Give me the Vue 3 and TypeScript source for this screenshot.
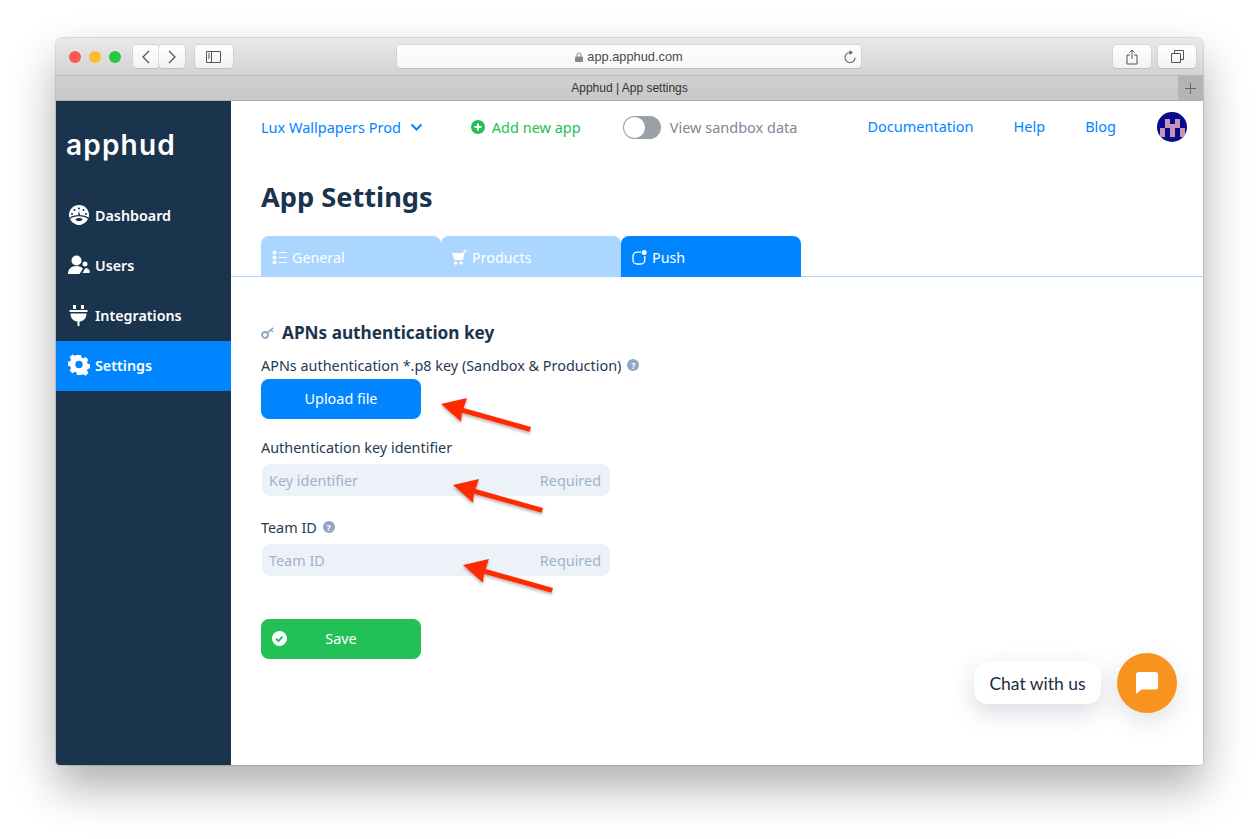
<template>
  <div class="window">
    <header class="toolbar">
      <div class="lights">
        <span class="light red"></span>
        <span class="light yellow"></span>
        <span class="light green"></span>
      </div>
      <div class="nav-pair">
        <button class="tool-btn small">
          <svg width="10" height="14" viewBox="0 0 10 14"><path d="M8 1 2 7l6 6" fill="none" stroke="#555" stroke-width="1.3" /></svg>
        </button>
        <button class="tool-btn small">
          <svg width="10" height="14" viewBox="0 0 10 14"><path d="m2 1 6 6-6 6" fill="none" stroke="#555" stroke-width="1.3" /></svg>
        </button>
      </div>
      <button class="tool-btn wide sidebar-btn">
        <svg width="16" height="12" viewBox="0 0 16 12"><path d="M.5.5h14v11H.5zM5.5.5v11" fill="none" stroke="#555" /><path d="M2 3h2M2 5h2M2 7h2" stroke="#555" /></svg>
      </button>
      <div class="address">
        <svg class="lock" width="8" height="10" viewBox="0 0 8 10"><path d="M2 4.500V3a2 2 0 0 1 4 0v1.500" fill="none" stroke="#888" /><rect y="4.500" width="8" height="5.500" rx="1" fill="#888" /></svg>
        <span>app.apphud.com</span>
        <svg class="reload" width="12" height="13" viewBox="0 0 12 13"><path d="M6 2.500a5 5 0 1 0 5 5" fill="none" stroke="#666" stroke-width="1.100" /><path d="M5.500 0 9 2.500 5.500 5z" fill="#666" /></svg>
      </div>
      <button class="tool-btn wide">
        <svg width="12" height="16" viewBox="0 0 12 16"><path d="M4 6H1v9h10V6H8M6 10V1M3.500 3.500 6 1l2.500 2.500" fill="none" stroke="#555" /></svg>
      </button>
      <button class="tool-btn wide last">
        <svg width="13" height="13" viewBox="0 0 13 13"><path d="M.5 3.500h9v9h-9zM3.500 3.500v-3h9v9h-3" fill="none" stroke="#555" /></svg>
      </button>
    </header>
    <div class="tabbar">
      <span class="tab-title">Apphud | App settings</span>
      <span class="plus">
        <svg width="11" height="11" viewBox="0 0 11 11"><path d="M5.500 0v11M0 5.500h11" stroke="#666" /></svg>
      </span>
    </div>

    <div class="app">
      <aside class="sidebar">
        <div class="logo">apphud</div>
        <nav class="menu">
          <a v-for="item in menu" :key="item.label" class="menu-item" :class="{ active: item.label === 'Settings' }">
            <svg class="menu-icon" width="22" height="22" viewBox="0 0 22 22" v-html="item.icon"></svg>
            {{ item.label }}
          </a>
        </nav>
      </aside>

      <main class="content">
        <div class="topbar">
          <span class="app-select">
            Lux Wallpapers Prod
            <svg width="13" height="8" viewBox="0 0 13 8"><path d="m1.500 1.500 5 5 5-5" fill="none" stroke="#0085ff" stroke-width="2" /></svg>
          </span>
          <span class="add-app">
            <svg width="14" height="14" viewBox="0 0 14 14"><circle cx="7" cy="7" r="7" fill="#22c055" /><path d="M7 3.500v7M3.500 7h7" stroke="#fff" stroke-width="2" /></svg>
            Add new app
          </span>
          <span class="toggle"><span class="knob"></span></span>
          <span class="sandbox">View sandbox data</span>
          <div class="links">
            <a>Documentation</a>
            <a>Help</a>
            <a>Blog</a>
          </div>
          <svg class="avatar" width="30" height="30" viewBox="0 0 30 30">
            <defs><clipPath id="round"><circle cx="15" cy="15" r="15" /></clipPath></defs>
            <g clip-path="url(#round)">
              <rect width="30" height="30" fill="#0a0a8c" />
              <path d="M8 7h5v5h5V7h5v9h-5v9h-5v-9H8zM3 16h5v9H3zM23 16h5v9h-5z" fill="#c495b5" />
            </g>
          </svg>
        </div>

        <h1 class="page-title">App Settings</h1>

        <div class="tabs">
          <a class="tab">
            <svg width="15" height="15" viewBox="0 0 15 15" fill="#fff"><circle cx="2.500" cy="2.500" r="2" /><circle cx="2.500" cy="7.500" r="2" /><circle cx="2.500" cy="12.500" r="2" /><path d="M7 2h8v1H7zM7 7h8v1H7zM7 12h8v1H7z" /></svg>
            General
          </a>
          <a class="tab">
            <svg width="15" height="15" viewBox="0 0 15 15" fill="#fff"><path d="M0 3h11l-1 6H2zM11.500 2.500 12 0h3v1.200h-2L11 10H2.500V9z" /><circle cx="3.500" cy="13" r="1.700" /><circle cx="9" cy="13" r="1.700" /></svg>
            Products
          </a>
          <a class="tab active">
            <svg width="15" height="15" viewBox="0 0 15 15"><path d="M9 2.200H5a4 4 0 0 0-4 4V10a4 4 0 0 0 4 4h3.800a4 4 0 0 0 4-4V6" fill="none" stroke="#fff" stroke-width="1.300" /><circle cx="12.200" cy="2.500" r="2.500" fill="#fff" /></svg>
            Push
          </a>
        </div>

        <form class="form" @submit.prevent>
          <h2 class="section-title">
            <svg width="14" height="12" viewBox="0 0 14 12"><circle cx="4" cy="8" r="3" fill="none" stroke="#8fa6c4" stroke-width="1.800" /><path d="m6.200 5.800 6-5M10 3l2 2" fill="none" stroke="#8fa6c4" stroke-width="1.500" /></svg>
            APNs authentication key
          </h2>
          <label class="field-label first">
            APNs authentication *.p8 key (Sandbox &amp; Production)
            <span class="hint">?</span>
          </label>
          <button class="btn upload">Upload file</button>

          <label class="field-label">Authentication key identifier</label>
          <div class="input">
            <span>Key identifier</span>
            <span>Required</span>
          </div>

          <label class="field-label">
            Team ID
            <span class="hint">?</span>
          </label>
          <div class="input">
            <span>Team ID</span>
            <span>Required</span>
          </div>

          <button class="btn save">
            <svg class="save-icon" width="15" height="15" viewBox="0 0 15 15"><circle cx="7.500" cy="7.500" r="7.500" fill="#fff" /><path d="m4.200 7.800 2.300 2.300 4-4.500" fill="none" stroke="#22c055" stroke-width="2" /></svg>
            Save
          </button>
        </form>

        <svg class="arrows" width="340" height="240" viewBox="0 0 340 240">
          <defs>
            <filter id="soft" x="-20%" y="-20%" width="140%" height="150%"><feDropShadow dx="0" dy="2" stdDeviation="1.500" flood-opacity=".3" /></filter>
          </defs>
          <g v-for="a in arrows" :key="a" :transform="`translate(${a})`" fill="#ff2a00" filter="url(#soft)">
            <path d="M0 0 26-6 22.600 4 90 23 88.600 27.700 21 8.700 20 17.700z" />
          </g>
        </svg>

        <div class="chat">
          <span class="chat-label">Chat with us</span>
          <span class="chat-btn">
            <svg width="24" height="24" viewBox="0 0 24 24"><path d="M3 0h18a3 3 0 0 1 3 3v13a3 3 0 0 1-3 3H6l-6 5V3a3 3 0 0 1 3-3z" fill="#fff" transform="translate(1 1) scale(.92)" /></svg>
          </span>
        </div>
      </main>
    </div>
  </div>
</template>

<script setup lang="ts">
const menu = [
  {
    label: 'Dashboard',
    icon: '<path fill="#fff" fill-rule="evenodd" d="M11 1a10 10 0 0 1 9.600 12.800C18.500 12 15 11 11 11s-7.500 1-9.600 2.800A10 10 0 0 1 11 1zM11 3.500a1 1 0 1 0 0 2 1 1 0 0 0 0-2zM6.500 5a1 1 0 1 0 0 2 1 1 0 0 0 0-2zM15.500 5a1 1 0 1 0 0 2 1 1 0 0 0 0-2zM4 9a1 1 0 1 0 0 2 1 1 0 0 0 0-2zM18 9a1 1 0 1 0 0 2 1 1 0 0 0 0-2zM11 7l-1 4h2z"/><path fill="#fff" d="M2 15c2-1.800 5.500-2.800 9-2.800s7 1 9 2.800c-1.800 3.600-5.500 6-9 6s-7.200-2.400-9-6zM11 14c-2 0-3.500.7-3.500 1.500S9 17 11 17s3.500-.7 3.500-1.500S13 14 11 14z" fill-rule="evenodd"/>',
  },
  {
    label: 'Users',
    icon: '<circle cx="8.500" cy="6.500" r="5" fill="#fff"/><path fill="#fff" d="M0 20c0-5 3-8 8.500-8 3 0 5 1 6.500 2.500L11.500 20z"/><circle cx="17" cy="10" r="2.500" fill="#fff"/><path fill="#fff" d="M14.500 19l3-5c2 0 4 1.500 4.500 4l-1 1z"/>',
  },
  {
    label: 'Integrations',
    icon: '<path fill="#fff" d="M5 1h3v4H5zM13 1h3v4h-3zM1.500 6h18v2h-18zM2.500 9.500h16c0 4.500-2.500 7.500-7 8V22h-2v-4.500c-4.500-.5-7-3.500-7-8z"/>',
  },
  {
    label: 'Settings',
    icon: '<path fill="#fff" fill-rule="evenodd" d="M9 1h4l.6 2.600 1.700.7 2.300-1.400 2.800 2.800-1.400 2.300.7 1.700 2.300.6v4l-2.300.6-.7 1.700 1.400 2.300-2.800 2.800-2.300-1.400-1.700.7L13 21H9l-.6-2.500-1.700-.7-2.300 1.400-2.800-2.800L3 14.100l-.7-1.700L0 11.800v-4l2.300-.6.7-1.700-1.400-2.300 2.800-2.800 2.300 1.400 1.700-.7zM11 6.800a3.700 3.700 0 1 0 0 7.400 3.700 3.700 0 0 0 0-7.400z"/>',
  },
]

const arrows = ['0 24', '12 105', '22 185']
</script>

<style>
body {
  background: #fff;
  min-height: 839px;
}
</style>

<style scoped>
.window {
  width: 1147px;
  height: 727px;
  margin: 38px 0 0 56px;
  border-radius: 6px 6px 4px 4px;
  overflow: hidden;
  box-shadow: 0 0 0 1px rgba(0, 0, 0, 0.12), 0 22px 45px rgba(0, 0, 0, 0.32);
  font-family: "Noto Sans", sans-serif;
  display: flex;
  flex-direction: column;
}

.toolbar {
  height: 38px;
  flex: none;
  box-sizing: border-box;
  display: flex;
  align-items: center;
  padding: 0 7px 0 13px;
  background: linear-gradient(#e9e9e9, #d3d3d3);
  border-bottom: 1px solid #b5b5b5;
}

.lights {
  display: flex;
  gap: 8px;
}

.light {
  width: 12px;
  height: 12px;
  border-radius: 50%;
}

.red { background: #fc5753; }
.yellow { background: #fdbc2e; }
.green { background: #27c83f; }

.nav-pair {
  display: flex;
  margin-left: 12px;
}

.tool-btn {
  height: 23px;
  flex: none;
  padding: 0;
  display: flex;
  align-items: center;
  justify-content: center;
  background: linear-gradient(#fff, #f2f2f2);
  border: none;
  border-radius: 4px;
  box-shadow: 0 0 0 0.5px #c4c4c4, 0 1px 0 #bbb;
}

.tool-btn.small {
  width: 26px;
}

.tool-btn.wide {
  width: 38px;
}

.sidebar-btn {
  margin-left: 10px;
}

.address {
  width: 464px;
  height: 23px;
  flex: none;
  margin: 0 252px 0 164px;
  position: relative;
  display: flex;
  align-items: center;
  justify-content: center;
  gap: 4px;
  background: linear-gradient(#fff, #f6f6f6);
  border-radius: 4px;
  box-shadow: 0 0 0 0.5px #c4c4c4, 0 1px 0 #bbb;
  font-family: "Liberation Sans", sans-serif;
  font-size: 12.800px;
  color: #4a4a4a;
}

.reload {
  position: absolute;
  right: 5px;
  top: 5px;
}

.last {
  margin-left: 7px;
}

.tabbar {
  height: 25px;
  flex: none;
  box-sizing: border-box;
  display: flex;
  align-items: center;
  justify-content: center;
  position: relative;
  background: linear-gradient(#d0d0d0, #c8c8c8);
  border-bottom: 1px solid #adadad;
  font-family: "Liberation Sans", sans-serif;
  font-size: 12px;
  color: #333;
}

.plus {
  position: absolute;
  right: 0;
  top: 0;
  bottom: 0;
  width: 25px;
  display: flex;
  align-items: center;
  justify-content: center;
  background: #b4b4b4;
}

.app {
  flex: 1;
  display: flex;
  min-height: 0;
}

.sidebar {
  width: 175px;
  flex: none;
  background: #1a344d;
}

.logo {
  margin: 26px 0 0 10px;
  height: 36px;
  font-family: "Inter", sans-serif;
  font-size: 28px;
  font-weight: 600;
  line-height: 36px;
  letter-spacing: 1.200px;
  color: #fff;
}

.menu {
  margin-top: 28px;
}

.menu-item {
  height: 50px;
  box-sizing: border-box;
  padding: 0 0 2px 12px;
  display: flex;
  align-items: center;
  gap: 5px;
  font-size: 14.300px;
  font-weight: 600;
  color: #fff;
}

.menu-item.active {
  background: #0085ff;
}

.content {
  flex: 1;
  min-width: 0;
  position: relative;
  background: #fff;
}

.topbar {
  height: 52px;
  display: flex;
  align-items: center;
  padding: 0 16px 0 30px;
  font-size: 14.500px;
}

.app-select {
  display: flex;
  align-items: center;
  gap: 9px;
  color: #0085ff;
}

.add-app {
  margin-left: 48px;
  display: flex;
  align-items: center;
  gap: 7px;
  color: #22c055;
}

.toggle {
  width: 38px;
  height: 23px;
  margin-left: 42px;
  box-sizing: border-box;
  padding: 1px;
  border-radius: 12px;
  background: #9aa0aa;
}

.knob {
  display: block;
  width: 21px;
  height: 21px;
  border-radius: 50%;
  background: #fff;
}

.sandbox {
  margin-left: 9px;
  color: #7d8794;
}

.links {
  margin-left: auto;
  padding-bottom: 2px;
  display: flex;
  gap: 40px;
  color: #0085ff;
}

.avatar {
  margin-left: 41px;
}

.page-title {
  margin: 26px 0 0 30px;
  font-size: 27.200px;
  line-height: 36px;
  font-weight: 700;
  color: #1a344d;
}

.tabs {
  height: 41px;
  margin-top: 21px;
  box-sizing: border-box;
  padding-left: 30px;
  display: flex;
  border-bottom: 1px solid #aad6ff;
}

.tab {
  width: 180px;
  height: 41px;
  flex: none;
  box-sizing: border-box;
  padding: 1px 0 0 11px;
  display: flex;
  align-items: center;
  gap: 5px;
  border-radius: 8px 8px 0 0;
  background: #aad6ff;
  font-size: 14.300px;
  color: #fff;
}

.tab.active {
  background: #0085ff;
}

.form {
  padding: 45px 0 0 30px;
  display: flex;
  flex-direction: column;
  align-items: flex-start;
}

.section-title {
  margin: 0;
  display: flex;
  align-items: center;
  gap: 7px;
  font-size: 17.200px;
  line-height: 22px;
  font-weight: 700;
  color: #1a344d;
}

.field-label {
  height: 32px;
  box-sizing: border-box;
  display: flex;
  align-items: center;
  gap: 6px;
  font-size: 14.400px;
  color: #1f3a55;
}

.field-label.first {
  margin-top: 5px;
}

.upload + .field-label {
  margin-top: 13px;
  padding-bottom: 2px;
}

.hint {
  width: 12px;
  height: 12px;
  display: flex;
  align-items: center;
  justify-content: center;
  border-radius: 50%;
  background: #8fa6c4;
  font-size: 9px;
  font-weight: 700;
  color: #fff;
}

.btn {
  width: 160px;
  height: 40px;
  padding: 0 0 2px;
  border: none;
  border-radius: 8px;
  position: relative;
  font-family: "Noto Sans", sans-serif;
  font-size: 14.400px;
  color: #fff;
}

.upload {
  margin-top: -2px;
  background: #0085ff;
}

.save {
  margin-top: 43px;
  background: #22c055;
}

.save-icon {
  position: absolute;
  left: 11px;
  top: 12px;
}

.input {
  width: 348px;
  height: 32px;
  margin-left: 1px;
  box-sizing: border-box;
  padding: 0 9px 0 7px;
  display: flex;
  align-items: center;
  justify-content: space-between;
  border-radius: 8px;
  background: #edf2f9;
  font-size: 14.400px;
  color: #9fb2cb;
}

.input + .field-label {
  margin-top: 16px;
  padding-bottom: 2px;
}

.arrows {
  position: absolute;
  left: 210px;
  top: 279px;
}

.chat {
  position: absolute;
  right: 26px;
  bottom: 52px;
  display: flex;
  align-items: center;
  gap: 16px;
}

.chat-label {
  width: 127px;
  height: 42px;
  display: flex;
  align-items: center;
  justify-content: center;
  border-radius: 14px;
  background: #fff;
  box-shadow: 0 8px 24px rgba(26, 52, 77, 0.18);
  font-family: "Lato", sans-serif;
  font-size: 17.500px;
  color: #1d2b45;
}

.chat-btn {
  width: 60px;
  height: 60px;
  display: flex;
  align-items: center;
  justify-content: center;
  border-radius: 50%;
  background: #f9931f;
  box-shadow: 0 8px 24px rgba(26, 52, 77, 0.15);
}
</style>
